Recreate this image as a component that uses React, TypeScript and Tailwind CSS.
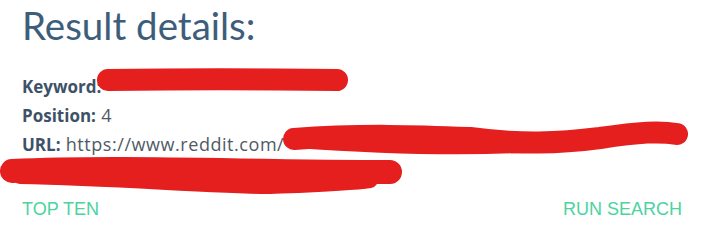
import React from "react";

export default function App() {
  return (
    <div className="relative w-[702px] h-[237px] bg-white overflow-hidden">
      <div className="flex flex-col h-full px-[22px] pt-[1px]">
        <h1
          className="text-[38.5px] leading-[48px] text-[#3d5e7b] font-normal"
          style={{ fontFamily: "Lato, 'Noto Sans', sans-serif" }}
        >
          Result details:
        </h1>
        <div
          className="mt-[23px] flex flex-col text-[18px] leading-[28px] tracking-[0.55px] text-[#4f5a66]"
          style={{ fontFamily: "'Open Sans', 'Noto Sans', sans-serif" }}
        >
          <div>
            <span className="font-bold text-[17px] tracking-normal text-[#3d5268]">Keyword:</span>
          </div>
          <div>
            <span className="font-bold text-[17px] tracking-normal text-[#3d5268]">Position:</span> 4
          </div>
          <div className="whitespace-nowrap">
            <span className="font-bold text-[17px] tracking-normal text-[#3d5268]">URL:</span> https://www.reddit.com/
          </div>
        </div>
        <div
          className="mt-auto mb-[18px] -mr-[2px] flex justify-between text-[18px] leading-[20px] text-[#4cd3a0]"
          style={{ fontFamily: "'Liberation Sans', Arial, sans-serif" }}
        >
          <span>TOP TEN</span>
          <span>RUN SEARCH</span>
        </div>
      </div>
      <svg
        className="absolute inset-0 pointer-events-none"
        width="702"
        height="237"
        viewBox="0 0 702 237"
      >
        <g fill="none" stroke="#e51e1e" strokeLinecap="round" strokeLinejoin="round">
          <path d="M108 80 C 180 79, 260 79, 337 80" strokeWidth="22" />
          <path d="M294 139 C 360 134, 420 136, 470 138 C 520 145, 560 143, 600 138 C 640 132, 660 131, 677 134" strokeWidth="22" />
          <path d="M296 140 C 380 146, 450 148, 520 145" strokeWidth="16" />
          <path d="M12 171 C 120 166, 250 172, 390 172" strokeWidth="24" />
          <path d="M20 176 C 120 178, 200 185, 270 186 C 320 184, 350 183, 370 180" strokeWidth="16" />
        </g>
      </svg>
    </div>
  );
}
